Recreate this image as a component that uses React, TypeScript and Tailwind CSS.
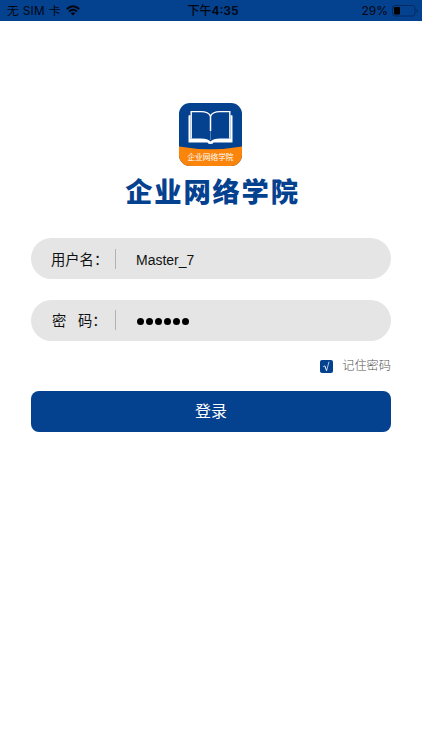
import React from 'react';

function StatusBar() {
  return (
    <header className="grid h-[21px] grid-cols-3 items-center bg-[#04418f] pl-[7px] pr-[3px] text-[12px] leading-[20px] text-[#02060e]">
      <div className="flex items-center gap-[5px]">
        <span className="whitespace-pre font-['Inter','Noto_Sans_CJK_SC',sans-serif] text-[11.8px] tracking-[0.3px]">无 SIM 卡</span>
        <svg width="14" height="11" viewBox="0 0 14 11" fill="none" stroke="#02060e" strokeWidth="2">
          <path d="M.8 4.1Q7-1.7 13.2 4.1M3 6.5Q7 2.9 11 6.5" />
          <path d="M7 10.4 4.8 8.2Q7 6.4 9.2 8.2Z" fill="#02060e" stroke="none" />
        </svg>
      </div>
      <div className="text-center font-['Inter','Noto_Sans_CJK_SC',sans-serif] text-[12px] font-semibold">
        <span className="font-medium">下午</span>4:35
      </div>
      <div className="flex items-center justify-end gap-[4px]">
        <span className="font-['Inter','Noto_Sans_CJK_SC',sans-serif] text-[12px]">29%</span>
        <svg width="27" height="12" viewBox="0 0 27 12">
          <rect x=".5" y=".5" width="22.5" height="10.5" rx="2.5" fill="none" stroke="#032b61" />
          <rect x="2" y="2" width="6" height="7.5" rx="1" fill="#000" />
          <path d="M24.5 4v4q1.5-.5 1.5-2t-1.5-2" fill="#032b61" />
        </svg>
      </div>
    </header>
  );
}

function Logo() {
  return (
    <svg className="mr-[2px] h-[63px] w-[63px]" viewBox="0 0 63 63">
      <defs>
        <clipPath id="tile">
          <rect width="63" height="63" rx="11" />
        </clipPath>
      </defs>
      <g clipPath="url(#tile)">
        <rect width="63" height="63" fill="#04418f" />
        <path d="M0 43.5Q31.5 49 63 43.5V63H0Z" fill="#fb850b" />
        <path
          d="M12.2 35.5V8.6H22Q29.5 8.6 31.5 13Q33.5 8.6 41 8.6H50.8V35.5"
          fill="none"
          stroke="#fff"
          strokeWidth="1.4"
        />
        <path d="M31.5 12V28" stroke="#fff" strokeWidth="1.5" />
        <path d="M31.5 28V37" stroke="#4f7cb6" strokeWidth="1" />
        <path
          d="M11.5 12 9.5 12.5V39.5H28.5Q29 41 31.5 41T34.5 39.5H53.5V12.5L51.5 12V35.5H41Q34 35.5 31.5 38.5Q29 35.5 22 35.5H11.5Z"
          fill="#fff"
        />
        <text x="31.5" y="57" textAnchor="middle" fontSize="7.7" fill="#fff">
          企业网络学院
        </text>
      </g>
    </svg>
  );
}

function Field({ label, children }: { label: React.ReactNode; children: React.ReactNode }) {
  return (
    <div className="flex h-[41px] items-center rounded-full bg-[#e5e5e5] pl-[20px]">
      <div className="w-[64px] whitespace-pre pt-[2px] text-[14.3px] leading-[20px] text-[#111]">{label}</div>
      <div className="h-[20px] w-px bg-[#b2b2b2]" />
      <div className="pl-[20px] pt-px text-[14.5px] leading-[20px] text-[#111]">{children}</div>
    </div>
  );
}

export default function App() {
  return (
    <div className="h-[750px] w-full overflow-hidden bg-white font-['Liberation_Sans','Noto_Sans_CJK_SC',sans-serif]">
      <StatusBar />
      <main className="flex flex-col px-[31px] pt-[81.5px]">
        <div className="flex flex-col items-center">
          <Logo />
          <h1 className="mt-[8px] pl-[3px] text-[27.3px] font-black leading-[38px] tracking-[1.8px] text-[#04418f]">
            企业网络学院
          </h1>
        </div>
        <div className="mt-[26.5px] flex flex-col gap-[20.5px]">
          <Field label="用户名：">
            <span className="relative top-px text-[14px]">Master_7</span>
          </Field>
          <Field
            label={
              <span className="flex pl-px">
                <span className="w-[26px]">密</span>码：
              </span>
            }
          >
            <span className="flex gap-[2px] pl-px pt-px">
              {[0, 1, 2, 3, 4, 5].map((n) => (
                <span key={n} className="h-[7px] w-[7px] rounded-full bg-black" />
              ))}
            </span>
          </Field>
        </div>
        <div className="mt-[15.5px] flex h-[20px] items-center justify-end gap-[9px]">
          <span className="flex h-[13px] w-[13px] items-center justify-center rounded-[2px] bg-[#04418f]">
            <svg width="9" height="11" viewBox="0 0 9 11" fill="none" stroke="#fff">
              <path d="M1 5.8 2.8 4.8" strokeWidth=".6" />
              <path d="M2.8 4.8 4.6 9.7" strokeWidth="1" />
              <path d="M4.6 9.7 7 .7" strokeWidth=".7" />
            </svg>
          </span>
          <span className="text-[12.2px] font-light leading-[20px] text-[#555]">记住密码</span>
        </div>
        <button className="mt-[15px] h-[41px] rounded-[8px] bg-[#04418f] text-[16px] leading-[20px] text-white">
          登录
        </button>
      </main>
    </div>
  );
}
